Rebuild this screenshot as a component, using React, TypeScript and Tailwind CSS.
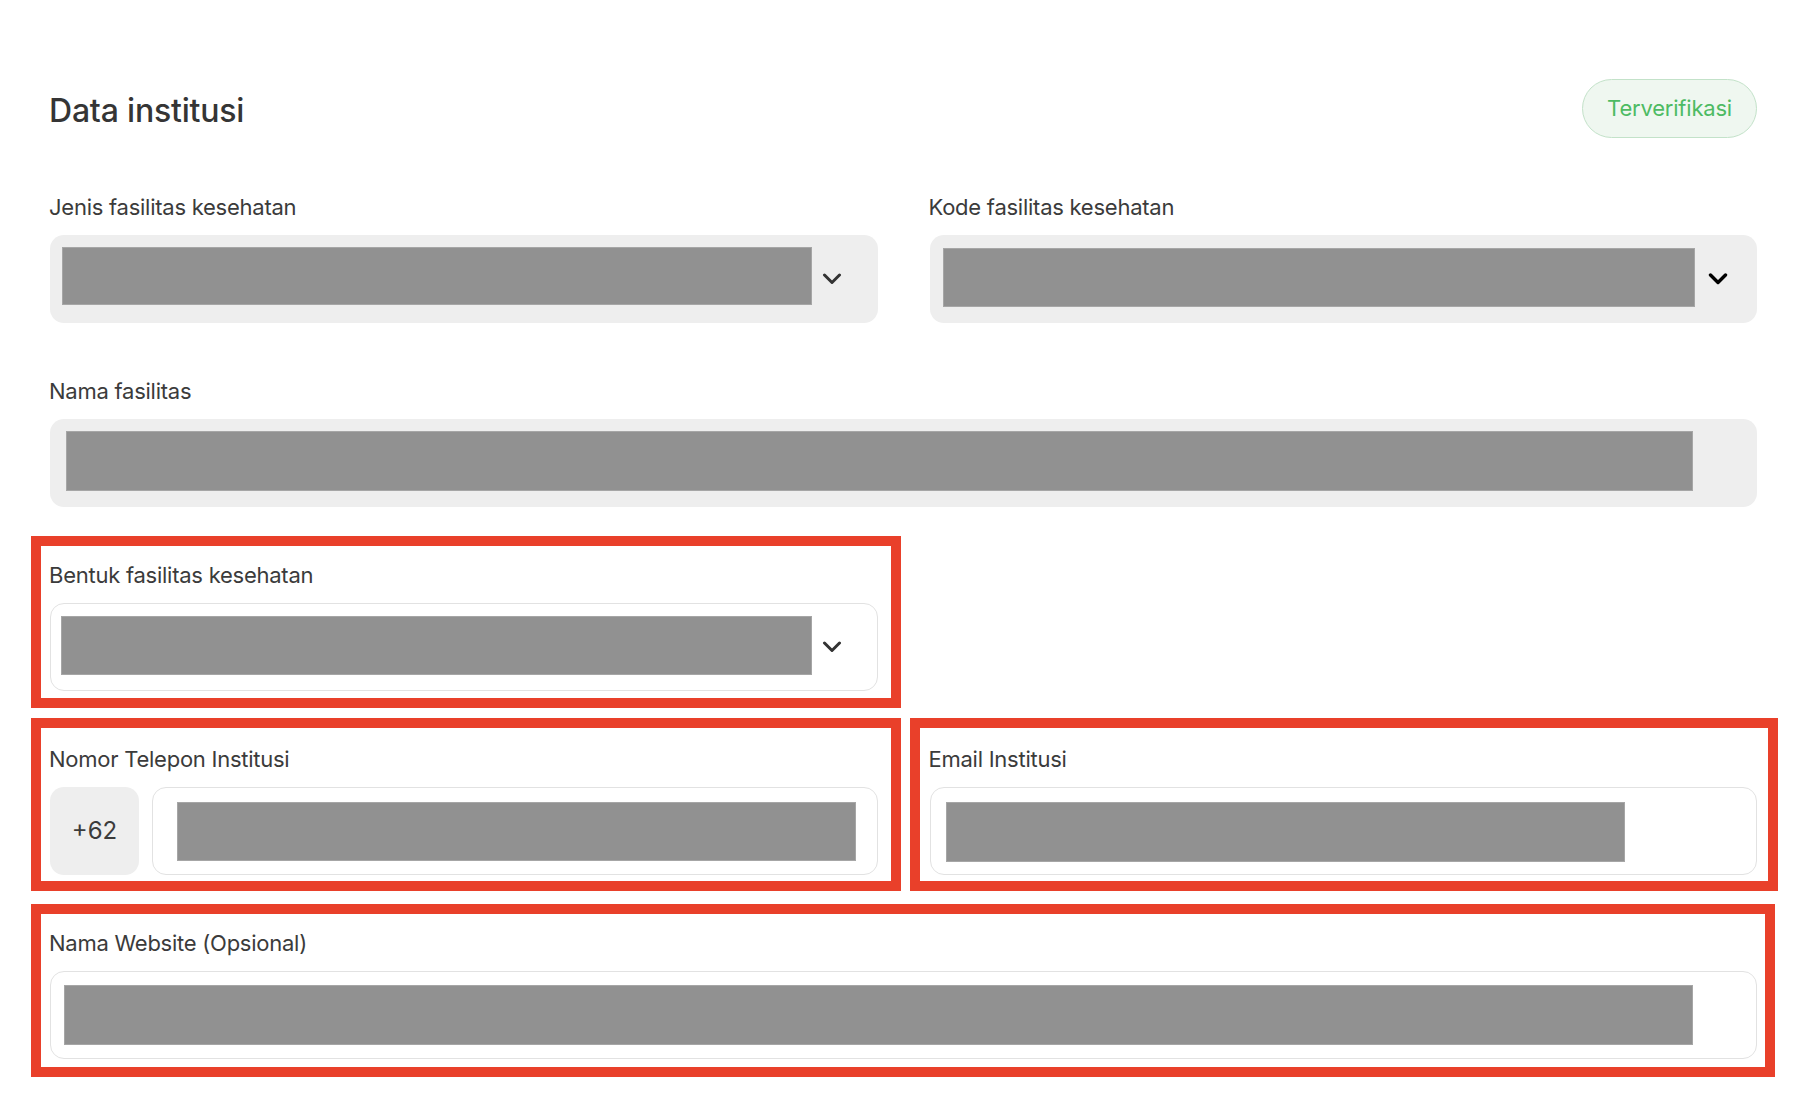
import React from "react";

function Chevron({ cls, color, sw }: { cls: string; color: string; sw: number }) {
  return (
    <svg className={cls} width="20" height="12" viewBox="0 0 20 12" fill="none">
      <path d="M2.5 2 L10 9.5 L17.5 2" stroke={color} strokeWidth={sw} strokeLinecap="round" strokeLinejoin="round" />
    </svg>
  );
}

function Label({ children }: { children: React.ReactNode }) {
  return (
    <div className="text-[22px] leading-[30px] tracking-[-0.25px] text-[#3b3b3b] mb-[13px] ml-[-1px] whitespace-nowrap">
      {children}
    </div>
  );
}

function RedBox({ cls }: { cls: string }) {
  return <div className={`pointer-events-none absolute border-[10px] border-[#e9402a] ${cls}`} />;
}

export default function App() {
  return (
    <div className="min-h-screen bg-white font-['Inter',sans-serif]">
      <div className="ml-[50px] w-[1707px] pt-[79px] pb-[24px]">
        <div className="flex justify-between items-start mb-[54px]">
          <h1 className="mt-[12px] ml-[-1px] text-[32px] leading-[40px] tracking-[-0.2px] font-medium text-[#353535]">
            Data institusi
          </h1>
          <div className="h-[59px] px-[24px] rounded-full border border-[#c3e2c9] bg-[#eff7f0] text-[#4dbb63] text-[22px] tracking-[-0.2px] flex items-center">
            Terverifikasi
          </div>
        </div>

        <div className="grid grid-cols-2 gap-x-[52px] gap-y-[53px]">
          {/* Jenis */}
          <div>
            <Label>Jenis fasilitas kesehatan</Label>
            <div className="h-[88px] rounded-[14px] bg-[#eeeeee] flex items-center pl-[12px] pr-[36px]">
              <div className="self-start mt-[12px] h-[58px] flex-1 bg-[#919191] border border-[#a6a6a6]" />
              <Chevron cls="ml-[10px] shrink-0" color="#333333" sw={3} />
            </div>
          </div>

          {/* Kode */}
          <div>
            <Label>Kode fasilitas kesehatan</Label>
            <div className="h-[88px] rounded-[14px] bg-[#eeeeee] flex items-center pl-[13px] pr-[29px]">
              <div className="self-start mt-[13px] h-[59px] flex-1 bg-[#919191] border border-[#a6a6a6]" />
              <Chevron cls="ml-[13px] shrink-0" color="#000000" sw={3.4} />
            </div>
          </div>

          {/* Nama */}
          <div className="col-span-2">
            <Label>Nama fasilitas</Label>
            <div className="h-[88px] rounded-[14px] bg-[#eeeeee] flex items-start pl-[16px] pt-[12px] pr-[64px]">
              <div className="h-[60px] flex-1 bg-[#919191] border border-[#a6a6a6]" />
            </div>
          </div>

          {/* Bentuk */}
          <div className="relative">
            <RedBox cls="left-[-19px] right-[-23px] top-[-24px] bottom-[-17px]" />
            <Label>Bentuk fasilitas kesehatan</Label>
            <div className="h-[88px] rounded-[14px] bg-white border border-[#e2e2e2] flex items-center pl-[10px] pr-[35px]">
              <div className="self-start mt-[12px] h-[59px] flex-1 bg-[#919191] border border-[#a6a6a6]" />
              <Chevron cls="ml-[10px] shrink-0" color="#333333" sw={3} />
            </div>
          </div>
          <div />

          {/* Nomor */}
          <div className="relative">
            <RedBox cls="left-[-19px] right-[-23px] top-[-26px] bottom-[-16px]" />
            <Label>Nomor Telepon Institusi</Label>
            <div className="flex gap-[13px]">
              <div className="w-[89px] h-[88px] shrink-0 rounded-[14px] bg-[#eeeeee] flex items-center justify-center text-[24px] text-[#3b3b3b]">
                +62
              </div>
              <div className="flex-1 h-[88px] rounded-[14px] bg-white border border-[#e2e2e2] flex items-start pl-[24px] pt-[14px] pr-[21px]">
                <div className="h-[59px] flex-1 bg-[#919191] border border-[#a6a6a6]" />
              </div>
            </div>
          </div>

          {/* Email */}
          <div className="relative">
            <RedBox cls="left-[-20px] right-[-21px] top-[-26px] bottom-[-16px]" />
            <Label>Email Institusi</Label>
            <div className="h-[88px] rounded-[14px] bg-white border border-[#e2e2e2] flex items-start pl-[15px] pt-[14px] pr-[131px]">
              <div className="h-[60px] flex-1 bg-[#919191] border border-[#a6a6a6]" />
            </div>
          </div>

          {/* Website */}
          <div className="relative col-span-2">
            <RedBox cls="left-[-19px] right-[-18px] top-[-24px] bottom-[-18px]" />
            <Label>Nama Website (Opsional)</Label>
            <div className="h-[88px] rounded-[14px] bg-white border border-[#e2e2e2] flex items-start pl-[13px] pt-[13px] pr-[63px]">
              <div className="h-[60px] flex-1 bg-[#919191] border border-[#a6a6a6]" />
            </div>
          </div>
        </div>
      </div>
    </div>
  );
}
